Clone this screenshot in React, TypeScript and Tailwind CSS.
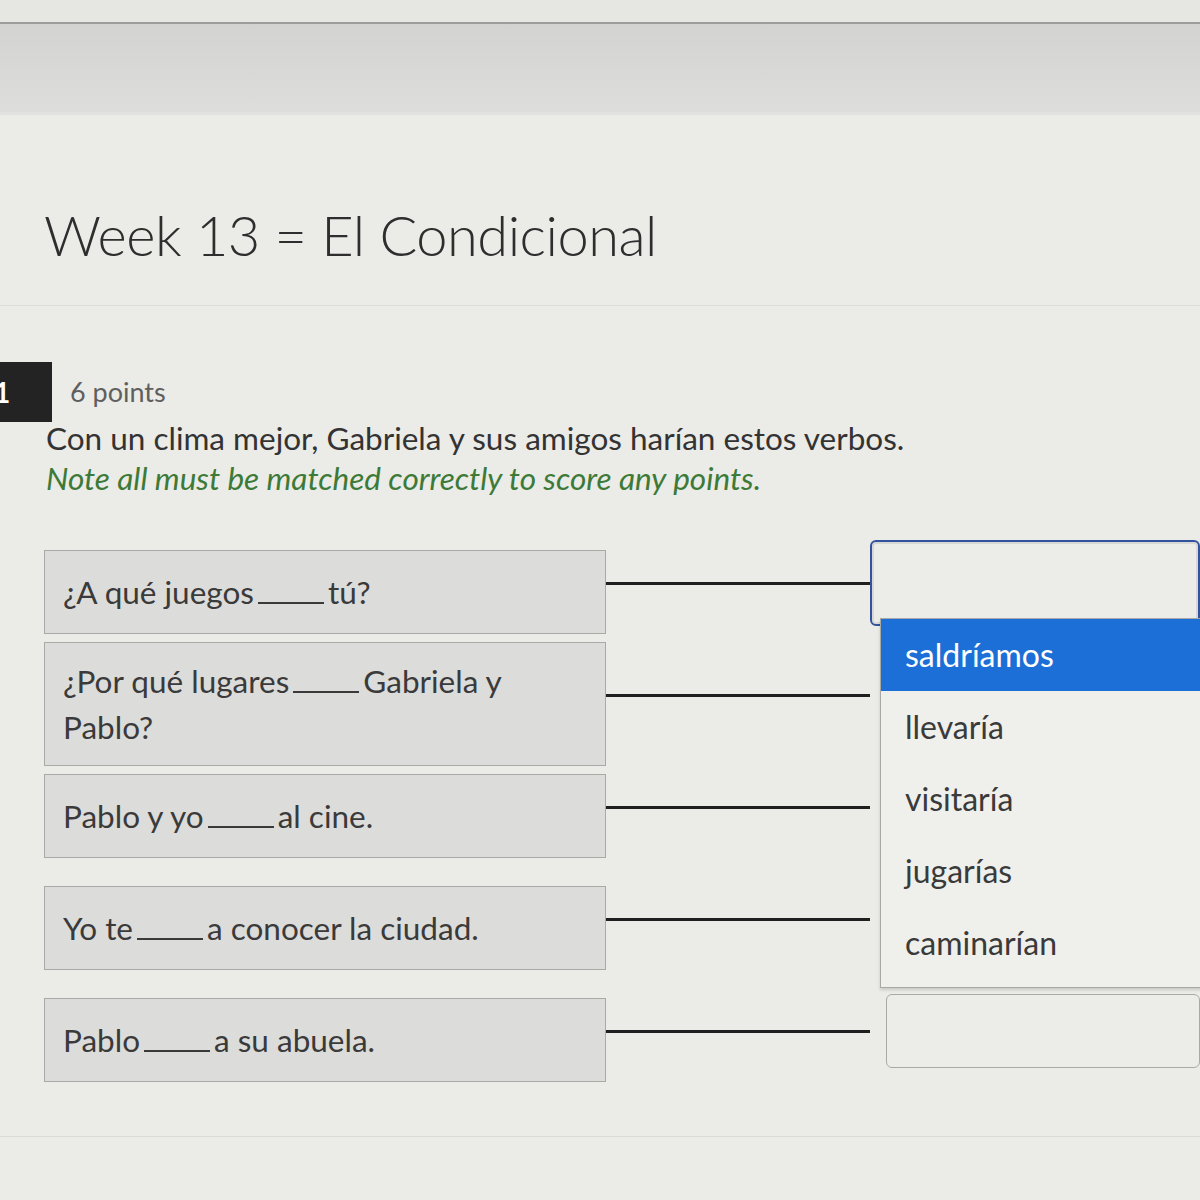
const rows = [
  { before: '¿A qué juegos', after: 'tú?', tall: false },
  { before: '¿Por qué lugares', after: 'Gabriela y Pablo?', tall: true },
  { before: 'Pablo y yo', after: 'al cine.', tall: false },
  { before: 'Yo te', after: 'a conocer la ciudad.', tall: false },
  { before: 'Pablo', after: 'a su abuela.', tall: false },
]

const options = ['saldríamos', 'llevaría', 'visitaría', 'jugarías', 'caminarían']

const Blank = () => (
  <span className="inline-block w-[66px] mx-[4px] border-b-2 border-[#3a3a3a] align-baseline" />
)

export default function App() {
  return (
    <div
      className="w-[1200px] h-[1200px] overflow-hidden bg-[#ebebe8] text-[#333]"
      style={{ fontFamily: 'Lato, "Open Sans", sans-serif' }}
    >
      {/* browser / header strip */}
      <div className="h-[22px] bg-[#e6e6e3]" />
      <div className="h-[2px] bg-[#9c9c9a]" />
      <div className="h-[88px] bg-gradient-to-b from-[#d3d3d1] to-[#dddddb]" />
      <div className="h-[3px] bg-[#e2e2e0]" />

      {/* title */}
      <div className="pt-[92px] pb-[42px] pl-[44px] border-b border-[#dcdcd9]">
        <h1 className="text-[56px] leading-none font-light tracking-[-0.5px] text-[#2e2e2e]">
          Week 13 = El Condicional
        </h1>
      </div>

      {/* question header */}
      <div className="mt-[56px] flex items-center">
        <div className="w-[58px] h-[60px] bg-[#232323] flex items-center text-white text-[28px] font-bold -ml-[6px]">
          1
        </div>
        <span className="ml-[18px] text-[27px] text-[#5f5f5f]">6 points</span>
      </div>
      <div className="pl-[46px] -mt-[4px]">
        <p className="text-[31.5px] leading-[40px] text-[#333]">
          Con un clima mejor, Gabriela y sus amigos harían estos verbos.
        </p>
        <p className="text-[31.5px] leading-[40px] italic text-[#3d7a37]">
          Note all must be matched correctly to score any points.
        </p>
      </div>

      {/* matching rows */}
      <div className="mt-[38px] pl-[44px] flex flex-col">
        {rows.map((r, i) => (
          <div key={i} className="h-[112px] flex items-center">
            <div
              className={`w-[562px] shrink-0 bg-[#dcdcda] border border-[#a9a9a7] px-[18px] flex items-center text-[31.5px] leading-[46px] text-[#3a3a3a] ${
                r.tall ? 'h-[124px]' : 'h-[84px]'
              }`}
            >
              <p className={r.tall ? 'w-[470px]' : ''}>
                {r.before}
                <Blank />
                {r.after}
              </p>
            </div>
            <div className="flex-1 flex items-center mb-[18px]">
              <div className="w-[264px] h-[3px] bg-[#1f1f1f]" />
              {i === 0 && (
                <div className="relative flex-1">
                  <div className="h-[86px] rounded-[6px] border-2 border-[#33539f] bg-[#ecece9] shadow-[inset_0_0_0_2px_#d8d8d6]" />
                  <div className="absolute left-[10px] top-[78px] w-[340px] bg-[#efefec] border border-[#a8a8a6] shadow-[0_2px_3px_rgba(0,0,0,0.15)] pb-[8px] z-10">
                    {options.map((o, j) => (
                      <div
                        key={o}
                        className={`h-[72px] flex items-center pl-[24px] text-[32px] ${
                          j === 0 ? 'bg-[#1b6fd6] text-white' : 'text-[#3a3a3a]'
                        }`}
                      >
                        {o}
                      </div>
                    ))}
                  </div>
                </div>
              )}
              {i === 4 && (
                <div className="flex-1 ml-[16px] h-[74px] rounded-[6px] border border-[#a9a9a7] bg-[#ecece9]" />
              )}
              {i > 0 && i < 4 && <div className="flex-1" />}
            </div>
          </div>
        ))}
      </div>

      <div className="mt-[40px] h-px bg-[#dadad7]" />
    </div>
  )
}
